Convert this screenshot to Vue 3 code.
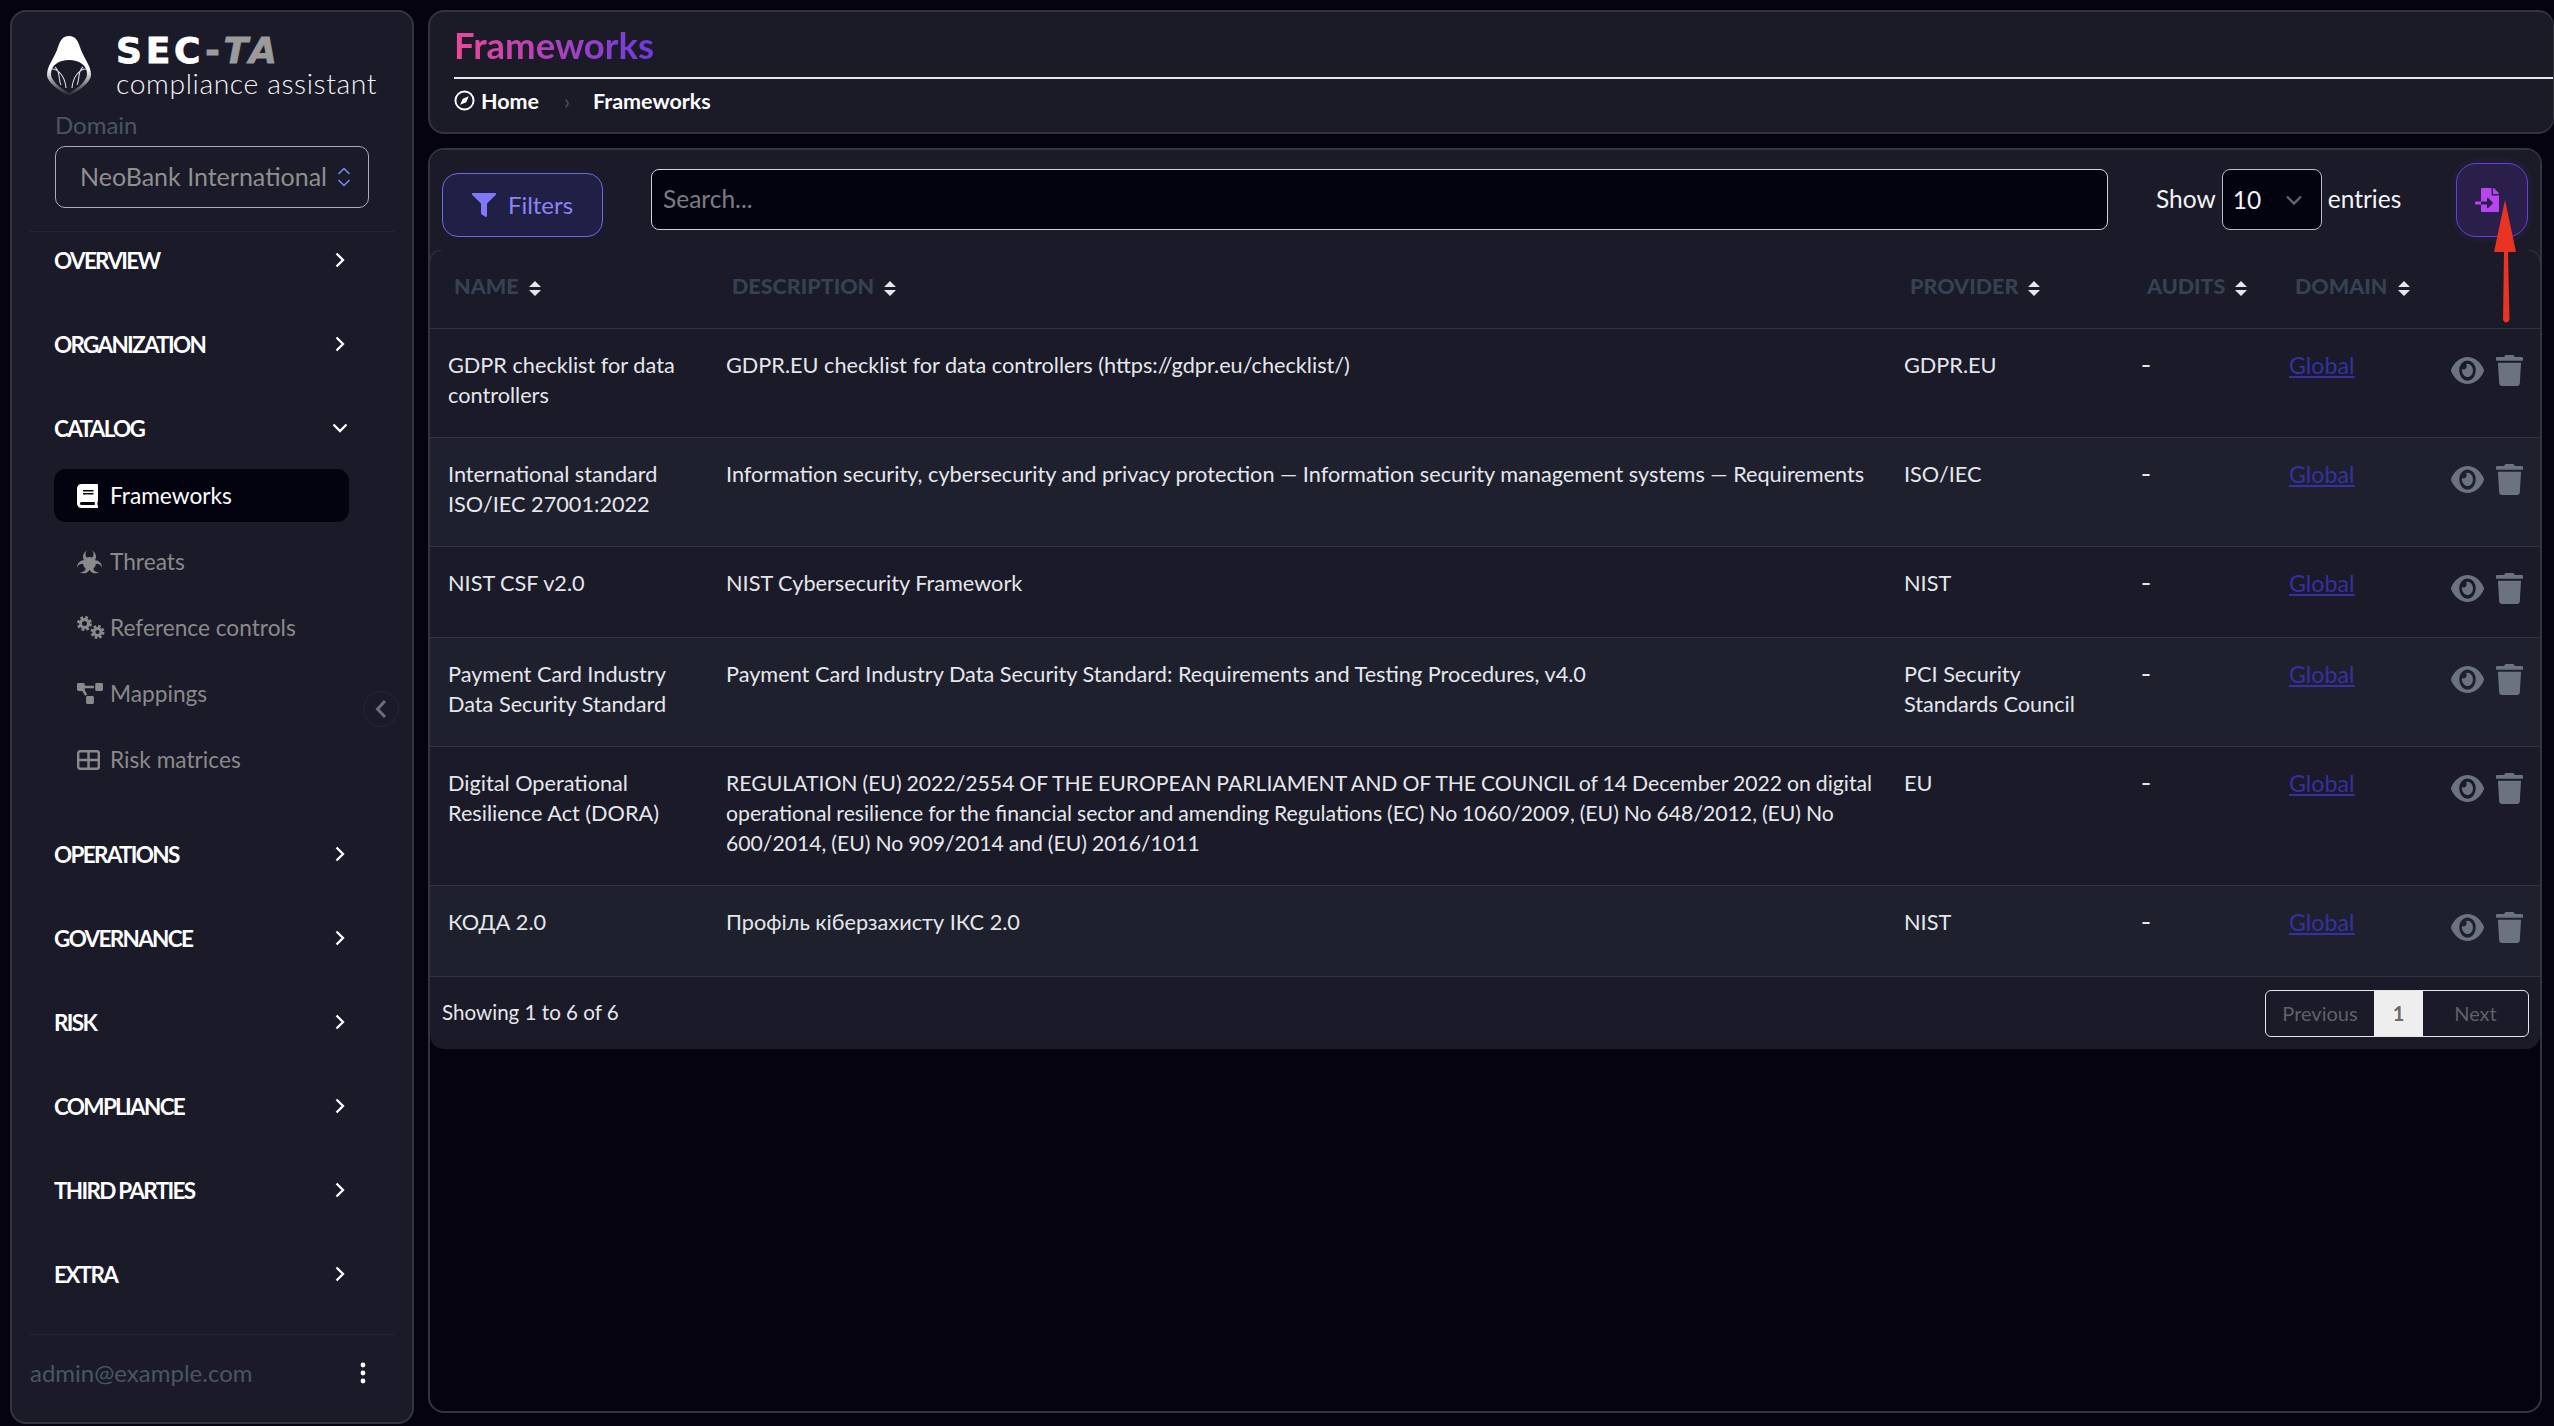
<script setup>
const topSections = ['OVERVIEW', 'ORGANIZATION']
const bottomSections = ['OPERATIONS', 'GOVERNANCE', 'RISK', 'COMPLIANCE', 'THIRD PARTIES', 'EXTRA']
const subItems = [
  { label: 'Frameworks', icon: 'book', active: true },
  { label: 'Threats', icon: 'bio' },
  { label: 'Reference controls', icon: 'cogs' },
  { label: 'Mappings', icon: 'map' },
  { label: 'Risk matrices', icon: 'grid' }
]
const columns = [
  { label: 'Name', cls: 'c-name' },
  { label: 'Description', cls: 'c-desc' },
  { label: 'Provider', cls: 'c-prov' },
  { label: 'Audits', cls: 'c-aud' },
  { label: 'Domain', cls: 'c-dom' }
]
const rows = [
  { name: 'GDPR checklist for data controllers', desc: 'GDPR.EU checklist for data controllers (https://gdpr.eu/checklist/)', provider: 'GDPR.EU' },
  { name: 'International standard ISO/IEC 27001:2022', desc: 'Information security, cybersecurity and privacy protection — Information security management systems — Requirements', provider: 'ISO/IEC' },
  { name: 'NIST CSF v2.0', desc: 'NIST Cybersecurity Framework', provider: 'NIST' },
  { name: 'Payment Card Industry Data Security Standard', desc: 'Payment Card Industry Data Security Standard: Requirements and Testing Procedures, v4.0', provider: 'PCI Security Standards Council' },
  { name: 'Digital Operational Resilience Act (DORA)', desc: 'REGULATION (EU) 2022/2554 OF THE EUROPEAN PARLIAMENT AND OF THE COUNCIL of 14 December 2022 on digital operational resilience for the financial sector and amending Regulations (EC) No 1060/2009, (EU) No 648/2012, (EU) No 600/2014, (EU) No 909/2014 and (EU) 2016/1011', provider: 'EU', tight: true },
  { name: 'КОДА 2.0', desc: 'Профіль кіберзахисту ІКС 2.0', provider: 'NIST' }
]
</script>

<template>
  <div class="app">
    <aside class="sidebar">
      <div class="brand">
        <svg class="logo" viewBox="0 0 44 60">
          <defs>
            <linearGradient id="hood" x1="0" y1="0" x2="0" y2="1">
              <stop offset="0.55" stop-color="#ffffff" />
              <stop offset="1" stop-color="#1a1a28" />
            </linearGradient>
          </defs>
          <path d="M22 0C15 0 13 5 10 14C6 24 0 30 0 39C0 46 12 55 22 60C32 55 44 46 44 39C44 30 38 24 34 14C31 5 29 0 22 0Z" fill="url(#hood)" />
          <path d="M4 38C4 29 12 24 22 24C32 24 40 29 40 38C40 45 30 53 22 57C14 53 4 45 4 38Z" fill="#1a1a28" />
          <path d="M5 33C11 33 18 40 19 52M39 33C33 33 26 40 25 52M8 31C14 36 11 44 14 49M36 31C30 36 33 44 30 49" fill="none" stroke="#d9d9d9" stroke-width="1.1" />
        </svg>
        <div class="brand-text">
          <div class="brand-name">SEC<span class="brand-dim">-<i>TA</i></span></div>
          <div class="brand-sub">compliance assistant</div>
        </div>
      </div>
      <label class="domain-label">Domain</label>
      <div class="domain-select">
        <span class="domain-value">NeoBank International</span>
        <svg class="updown" viewBox="0 0 14 22"><path d="M1.500 8L7 2.500L12.500 8M1.500 14L7 19.500L12.500 14" fill="none" stroke="#818cf8" stroke-width="1.500" /></svg>
      </div>
      <hr class="side-rule top-rule" />

      <nav class="nav">
        <div v-for="s in topSections" :key="s" class="section">
          <span>{{ s }}</span>
          <svg class="chev" viewBox="0 0 12 18"><path d="M2.500 2.500L9 9L2.500 15.500" /></svg>
        </div>
        <div class="section">
          <span>CATALOG</span>
          <svg class="chev down" viewBox="0 0 18 12"><path d="M2.500 2.500L9 9L15.500 2.500" /></svg>
        </div>
        <ul class="sublist">
          <li v-for="item in subItems" :key="item.label" class="subitem" :class="{ active: item.active }">
            <svg v-if="item.icon === 'book'" class="subicon" viewBox="0 0 448 512" style="width:21px;height:24px"><path d="M448 360V24c0-13.3-10.7-24-24-24H96C43 0 0 43 0 96v320c0 53 43 96 96 96h328c13.3 0 24-10.7 24-24v-16c0-7.5-3.5-14.3-8.9-18.7-4.2-15.4-4.2-59.3 0-74.7 5.4-4.3 8.9-11.1 8.9-18.6zM128 134c0-3.3 2.7-6 6-6h212c3.3 0 6 2.7 6 6v20c0 3.3-2.7 6-6 6H134c-3.3 0-6-2.7-6-6v-20zm0 64c0-3.3 2.7-6 6-6h212c3.3 0 6 2.7 6 6v20c0 3.3-2.7 6-6 6H134c-3.3 0-6-2.7-6-6v-20zm253.400 250H96c-17.700 0-32-14.300-32-32 0-17.600 14.400-32 32-32h285.400c-1.900 17.100-1.900 46.900 0 64z" /></svg>
            <svg v-else-if="item.icon === 'bio'" class="subicon" viewBox="0 0 26 24">
              <g v-for="a in [0, 120, 240]" :key="a" :transform="`rotate(${a} 13 13.500)`">
                <path fill-rule="evenodd" d="M19.800 6.500A6.800 6.800 0 1 1 6.200 6.500A6.800 6.800 0 1 1 19.800 6.500ZM17.200 3.900A4.200 4.200 0 1 0 8.800 3.900A4.200 4.200 0 1 0 17.200 3.900Z" />
              </g>
              <circle cx="13" cy="13.500" r="5.800" fill="none" stroke="currentColor" stroke-width="1.600" />
              <circle cx="13" cy="13.500" r="1.800" />
            </svg>
            <svg v-else-if="item.icon === 'cogs'" class="subicon" viewBox="0 0 28 24" style="width:28px;height:24px">
              <circle cx="7.500" cy="7.500" r="4" fill="none" stroke="currentColor" stroke-width="3" />
              <circle cx="7.500" cy="7.500" r="6" fill="none" stroke="currentColor" stroke-width="3" stroke-dasharray="2.700 2" />
              <circle cx="20.500" cy="16" r="3.600" fill="none" stroke="currentColor" stroke-width="3" />
              <circle cx="20.500" cy="16" r="5.500" fill="none" stroke="currentColor" stroke-width="3" stroke-dasharray="2.500 1.800" />
            </svg>
            <svg v-else-if="item.icon === 'map'" class="subicon" viewBox="0 0 640 512" style="width:26px;height:21px"><path d="M384 320H256c-17.670 0-32 14.330-32 32v128c0 17.670 14.330 32 32 32h128c17.670 0 32-14.330 32-32V352c0-17.670-14.330-32-32-32zM192 32c0-17.670-14.330-32-32-32H32C14.330 0 0 14.330 0 32v128c0 17.670 14.330 32 32 32h95.720l73.160 128.040C211.980 300.980 232.400 288 256 288h.28L192 175.510V128h224V64H192V32zM608 0H480c-17.670 0-32 14.330-32 32v128c0 17.670 14.330 32 32 32h128c17.670 0 32-14.330 32-32V32c0-17.670-14.330-32-32-32z" /></svg>
            <svg v-else class="subicon" viewBox="0 0 23 20" style="width:23px;height:20px">
              <rect x="1.200" y="1.200" width="20.600" height="17.600" rx="2" fill="none" stroke="currentColor" stroke-width="2.400" />
              <path d="M11.500 1V19M1 10H22" fill="none" stroke="currentColor" stroke-width="2.400" />
            </svg>
            <span class="sublabel">{{ item.label }}</span>
          </li>
        </ul>
        <div v-for="s in bottomSections" :key="s" class="section">
          <span>{{ s }}</span>
          <svg class="chev" viewBox="0 0 12 18"><path d="M2.500 2.500L9 9L2.500 15.500" /></svg>
        </div>
      </nav>

      <hr class="side-rule bottom-rule" />
      <div class="account">
        <span>admin@example.com</span>
        <svg class="dots" viewBox="0 0 6 22"><circle cx="3" cy="3" r="2.400" /><circle cx="3" cy="11" r="2.400" /><circle cx="3" cy="19" r="2.400" /></svg>
      </div>

      <button class="collapse">
        <svg viewBox="0 0 12 20"><path d="M10 2L2.500 10L10 18" fill="none" stroke="#6b6f7c" stroke-width="3" /></svg>
      </button>
    </aside>

    <main class="main">
      <header class="head-panel">
        <h1 class="title">Frameworks</h1>
        <div class="crumbs">
          <svg class="compass" viewBox="0 0 22 22"><circle cx="11" cy="11" r="9.500" fill="none" stroke="#fff" stroke-width="2" /><path d="M15.500 6.500L12.800 12.800L6.500 15.500L9.200 9.200Z" fill="#fff" /></svg>
          <span class="crumb-home">Home</span>
          <span class="crumb-sep">›</span>
          <span class="crumb-cur">Frameworks</span>
        </div>
      </header>

      <section class="table-panel">
        <div class="card">
          <div class="toolbar">
            <button class="filters">
              <svg viewBox="0 0 512 512"><path d="M487.976 0H24.028C2.710 0-8.047 25.866 7.058 40.971L192 225.941V432c0 7.831 3.821 15.170 10.237 19.662l80 55.980C298.020 518.690 320 507.493 320 487.980V225.941l184.947-184.970C520.021 25.896 509.338 0 487.976 0z" /></svg>
              <span class="filter-text">Filters</span>
            </button>
            <div class="search">Search...</div>
            <div class="entries">
              <span class="ent-text">Show</span>
              <div class="size-select">
                <span>10</span>
                <svg viewBox="0 0 18 12"><path d="M2 2.500L9 9.500L16 2.500" fill="none" stroke="#5f6470" stroke-width="2.400" /></svg>
              </div>
              <span class="ent-text">entries</span>
            </div>
            <div class="import-wrap">
              <button class="import">
                <svg viewBox="0 0 512 512"><path d="M16 288c-8.800 0-16 7.200-16 16v32c0 8.800 7.200 16 16 16h112v-64H16zm336-152V0H152c-13.300 0-24 10.700-24 24v264h127.990v-65.180c0-14.280 17.290-21.410 27.360-11.270l95.700 96.430c6.600 6.650 6.600 17.390 0 24.040l-95.700 96.420c-10.060 10.140-27.360 3.010-27.360-11.270V352H128v136c0 13.300 10.700 24 24 24h336c13.300 0 24-10.700 24-24V160H376c-13.200 0-24-10.800-24-24zm153-31L407.100 7c-4.500-4.500-10.600-7-17-7H384v128h128v-6.100c0-6.300-2.500-12.400-7-16.900z" /></svg>
              </button>
            </div>
          </div>

          <div class="grid-wrap">
            <table class="grid">
              <thead>
                <tr>
                  <th v-for="c in columns" :key="c.label" :class="c.cls">
                    <span>{{ c.label }}</span>
                    <svg class="sort" viewBox="0 0 12 15"><path d="M6 0L12 6H0ZM6 15L0 9H12Z" /></svg>
                  </th>
                  <th class="c-act"></th>
                </tr>
              </thead>
              <tbody>
                <tr v-for="(r, i) in rows" :key="r.name" :class="{ even: i % 2 === 1 }">
                  <td>{{ r.name }}</td>
                  <td :class="{ tight: r.tight }">{{ r.desc }}</td>
                  <td>{{ r.provider }}</td>
                  <td class="dash">-</td>
                  <td><a class="link">Global</a></td>
                  <td class="acts">
                    <div class="act-row">
                      <svg class="eye" viewBox="0 64 576 384" preserveAspectRatio="none"><path d="M572.520 241.400C518.290 135.590 410.930 64 288 64S57.680 135.640 3.480 241.410a32.350 32.350 0 0 0 0 29.190C57.710 376.410 165.070 448 288 448s230.320-71.640 284.520-177.410a32.350 32.350 0 0 0 0-29.190zM288 400a144 144 0 1 1 144-144 143.930 143.930 0 0 1-144 144zm0-240a95.310 95.310 0 0 0-25.310 3.790 47.850 47.850 0 0 1-66.900 66.900A95.780 95.780 0 1 0 288 160z" /></svg>
                      <svg class="trash" viewBox="0 0 448 512"><path d="M432 32H312l-9.400-18.700A24 24 0 0 0 281.100 0H166.800a23.720 23.720 0 0 0-21.400 13.300L136 32H16A16 16 0 0 0 0 48v32a16 16 0 0 0 16 16h416a16 16 0 0 0 16-16V48a16 16 0 0 0-16-16zM53.200 467a48 48 0 0 0 47.900 45h245.800a48 48 0 0 0 47.900-45L416 128H32z" /></svg>
                    </div>
                  </td>
                </tr>
              </tbody>
            </table>
          </div>

          <div class="footer">
            <span class="showing">Showing 1 to 6 of 6</span>
            <div class="pager">
              <span class="pg prev">Previous</span>
              <span class="pg cur">1</span>
              <span class="pg next">Next</span>
            </div>
          </div>
        </div>

        <svg class="arrow" viewBox="0 0 24 124"><path d="M11 0L22 52H14L15.500 120Q12 125 9 120L10 52H0Z" fill="#e93323" /></svg>
      </section>
    </main>
  </div>
</template>

<style>
html, body { margin: 0; background: #04030f; }
</style>

<style scoped>
.app {
  display: flex;
  gap: 14px;
  width: 2554px;
  height: 1426px;
  padding: 10px 0 2px 10px;
  box-sizing: border-box;
  background: #04030f;
  color: #e5e7eb;
  font-family: "Lato", "Noto Sans", sans-serif;
  font-size: 21px;
  overflow: hidden;
}

/* sidebar */
.sidebar {
  position: relative;
  flex: 0 0 404px;
  box-sizing: border-box;
  background: #1a1a28;
  border: 2px solid #34343f;
  border-radius: 16px;
  display: flex;
  flex-direction: column;
}
.brand { display: flex; align-items: flex-start; gap: 26px; padding: 24px 0 0 35px; height: 60px; }
.logo { width: 44px; height: 60px; flex: none; }
.brand-text { margin-top: -3px; margin-left: -1px; }
.brand-name { font-family: "DejaVu Sans", sans-serif; font-weight: 700; font-size: 36px; line-height: 36px; letter-spacing: 3.700px; color: #fff; height: 36px; -webkit-text-stroke: 0.8px currentColor; }
.brand-dim { color: #9b9b9b; }
.brand-sub { font-family: "Lato", sans-serif; font-size: 28.300px; line-height: 28px; color: #f3f4f6; letter-spacing: 0.6px; font-weight: 300; }
.domain-label { margin: 14px 0 0 43px; font-size: 24px; line-height: 30px; color: #4b5563; }
.domain-select {
  margin: 6px 0 0 43px;
  width: 314px;
  height: 62px;
  box-sizing: border-box;
  border: 1px solid #a9adbd;
  border-radius: 10px;
  padding: 0 17px 0 24px;
  display: flex;
  align-items: center;
  justify-content: space-between;
  font-size: 25px;
  color: #8f8f8f;
}
.domain-value { margin-top: -2px; }
.updown { width: 14px; height: 22px; }
.side-rule { border: 0; height: 1px; background: #25253a; margin: 0 18px; flex: none; }
.top-rule { margin-top: 23px; }
.nav { display: flex; flex-direction: column; padding: 12px 0 0 42px; width: 334px; gap: 52px; height: 1102px; box-sizing: border-box; flex: none; }
.section {
  height: 32px;
  display: flex;
  align-items: center;
  justify-content: space-between;
  font-weight: 700;
  font-size: 22.500px;
  letter-spacing: -1.7px;
  color: #fff;
}
.chev { width: 12px; height: 18px; fill: none; stroke: #fff; stroke-width: 2.300; }
.chev.down { width: 18px; height: 12px; margin-right: -3px; }
.sublist { list-style: none; margin: -27px 0 0 0; padding: 0; display: flex; flex-direction: column; gap: 13px; width: 295px; }
.subitem {
  display: flex;
  align-items: center;
  height: 53px;
  box-sizing: border-box;
  padding-left: 23px;
  border-radius: 12px;
  color: #8a8a8a;
  font-size: 22.700px;
  position: relative;
}
.subitem.active { background: #03020f; color: #fff; }
.subicon { width: 25px; height: 24px; fill: currentColor; flex: none; }
.sublabel { position: absolute; left: 56px; }
.account { display: flex; align-items: center; justify-content: space-between; margin: 23px 0 0 18px; width: 336px; font-size: 24px; color: #4b5563; }
.dots { width: 6px; height: 22px; fill: #fff; }
.collapse {
  position: absolute;
  left: 351px;
  top: 679px;
  width: 36px;
  height: 36px;
  padding: 0;
  background: transparent;
  border: 1px solid #25253a;
  border-radius: 50%;
  display: flex;
  align-items: center;
  justify-content: center;
}
.collapse svg { width: 12px; height: 20px; }

/* main */
.main { flex: 1; min-width: 0; display: flex; flex-direction: column; gap: 14px; }
.head-panel {
  height: 124px;
  box-sizing: border-box;
  background: #1b1b28;
  border: 2px solid #34343f;
  border-right-width: 1px;
  border-radius: 16px;
  padding: 0 0 0 24px;
}
.title {
  margin: 0;
  height: 67px;
  box-sizing: border-box;
  border-bottom: 2px solid #e5e7eb;
  font-size: 36.500px;
  font-weight: 700;
  line-height: 66px;
  background: linear-gradient(90deg, #ec4899 0, #6d3be0 200px);
  -webkit-background-clip: text;
  background-clip: text;
  color: transparent;
}
.crumbs { display: flex; align-items: center; height: 43px; font-size: 21.500px; color: #fff; }
.compass { width: 21px; height: 21px; margin-right: 6px; }
.crumb-home { font-weight: 700; width: 83px; }
.crumb-sep { color: #4b4f5c; width: 29px; }
.crumb-cur { font-weight: 700; }

.table-panel {
  position: relative;
  flex: 1;
  margin: 0 12px 11px 0;
  border: 2px solid #34343f;
  border-radius: 16px;
}
.card { background: #1a1a28; border-radius: 14px; }
.toolbar { display: flex; align-items: flex-start; padding: 13px 12px 0 12px; }
.filters {
  margin-top: 10px;
  width: 161px;
  height: 64px;
  box-sizing: border-box;
  background: #201f45;
  border: 1px solid #6e69e8;
  border-radius: 16px;
  color: #8b84f5;
  font: inherit;
  font-size: 24px;
  display: flex;
  align-items: center;
  justify-content: center;
  gap: 12px;
  padding: 0;
}
.filter-text { margin-top: -2px; }
.filters svg { width: 24px; height: 24px; fill: #8079f7; }
.search {
  margin: 6px 0 0 48px;
  width: 1457px;
  height: 61px;
  box-sizing: border-box;
  background: #03020f;
  border: 1px solid #cfd0d8;
  border-radius: 8px;
  padding: 0 11px;
  font-size: 24.500px;
  line-height: 57px;
  color: #7b7d85;
}
.entries { display: flex; align-items: center; gap: 6px; margin: 6px 0 0 48px; height: 61px; font-size: 24.500px; color: #f3f4f6; }
.ent-text { margin-top: -3px; }
.size-select {
  width: 100px;
  height: 61px;
  box-sizing: border-box;
  background: #03020f;
  border: 1px solid #b9bbc6;
  border-radius: 8px;
  padding: 0 18px 0 10px;
  display: flex;
  align-items: center;
  justify-content: space-between;
}
.size-select svg { width: 18px; height: 12px; }
.import-wrap { margin-left: auto; padding: 0 0 0 6px; border-radius: 20px; }
.import {
  display: flex;
  align-items: center;
  justify-content: center;
  width: 72px;
  height: 74px;
  padding: 0;
  box-sizing: border-box;
  background: #2a1f4b;
  border: 1px solid #6d3be0;
  border-radius: 20px;
  box-shadow: 0 0 0 5px #1d1d30;
}
.import svg { width: 24px; height: 24px; fill: #b945f0; margin: 0 10px 0 0; }

.grid-wrap { position: relative; margin-top: 13px; }
.grid-wrap::before, .grid-wrap::after {
  content: "";
  position: absolute;
  top: 0;
  width: 10px;
  height: 10px;
  border-top: 1px solid #34343f;
}
.grid-wrap::before { left: 0; border-left: 1px solid #34343f; border-top-left-radius: 10px; }
.grid-wrap::after { right: 0; border-right: 1px solid #34343f; border-top-right-radius: 10px; }
.grid { width: 100%; table-layout: fixed; border-collapse: collapse; }
.grid th {
  height: 78px;
  padding: 0 0 5px 24px;
  box-sizing: border-box;
  text-align: left;
  text-transform: uppercase;
  font-size: 21.500px;
  font-weight: 900;
  color: #374151;
  white-space: nowrap;
}
.sort { width: 12px; height: 15px; fill: #e5e7eb; margin-left: 10px; vertical-align: -2px; }
.c-name { width: 278px; }
.c-desc { width: 1178px; }
.c-prov { width: 237px; }
.c-aud { width: 148px; }
.c-dom { width: 150px; }
.c-act { width: 119px; }
.grid td {
  height: 91px;
  box-sizing: border-box;
  padding: 21px 18px 27px 18px;
  vertical-align: top;
  line-height: 30px;
  font-size: 21.700px;
  color: #e5e7eb;
  border-top: 1px solid #34343f;
}
.grid td.tight { font-size: 21.200px; word-spacing: -0.5px; padding-right: 8px; }
.grid td.dash { font-family: "Inter", sans-serif; font-weight: 500; }
.grid .even td { background: #1e202e; }
.grid tr:last-child td { border-bottom: 1px solid #34343f; }
.link { color: #3730a3; text-decoration: underline; font-size: 23.200px; }
.grid td.acts { padding: 21px 0 0 0; }
.act-row { display: flex; justify-content: flex-end; align-items: flex-start; gap: 12px; padding-right: 17px; }
.eye { width: 33px; height: 27px; fill: #6b7280; margin-top: 7px; }
.trash { width: 27px; height: 31px; fill: #6b7280; margin-top: 5px; }

.footer { display: flex; align-items: center; justify-content: space-between; padding: 13px 11px 12px 12px; font-size: 20.600px; color: #e5e7eb; }
.showing { margin-top: -3px; }
.pager { display: flex; height: 47px; border: 1px solid #e5e7eb; border-radius: 6px; box-sizing: border-box; overflow: hidden; color: #5f6068; font-size: 20px; }
.pg { display: flex; align-items: center; justify-content: center; height: 100%; }
.prev { width: 108px; }
.cur { width: 49px; background: #eeeeee; font-weight: 700; color: #6b6b6b; }
.next { width: 105px; }

.arrow { position: absolute; right: 22px; top: 50px; width: 24px; height: 124px; }
</style>
